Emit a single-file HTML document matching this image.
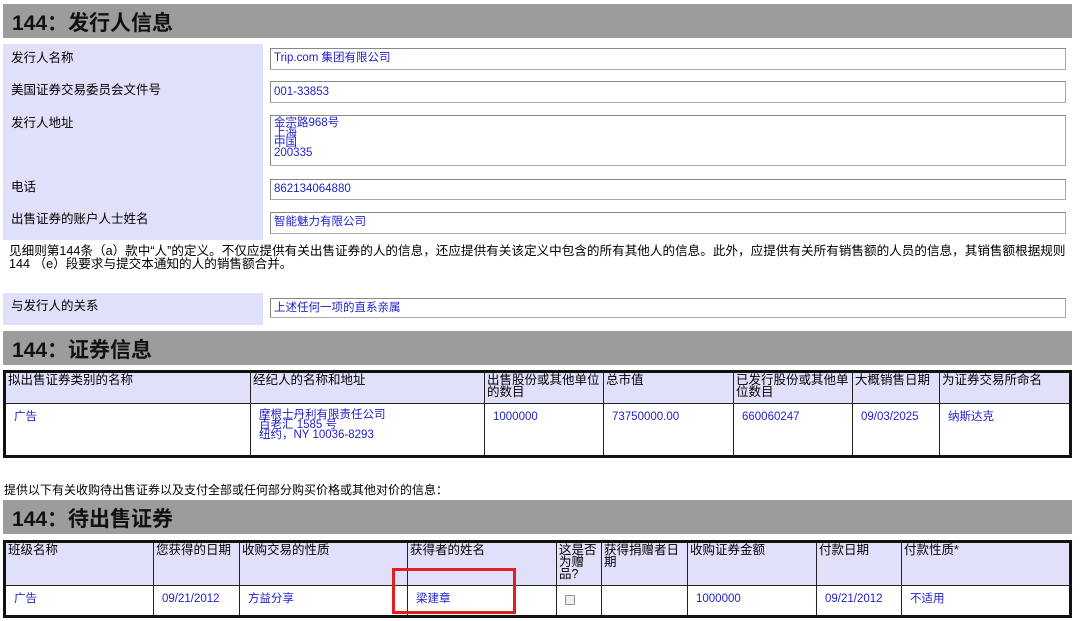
<!DOCTYPE html>
<html><head><meta charset="utf-8"><style>
*{margin:0;padding:0;box-sizing:border-box}
body{width:1080px;height:621px;background:#fff;font-family:"Liberation Sans","Noto Sans CJK SC",sans-serif;color:#000;position:relative;overflow:hidden}
.a{position:absolute}
.hd{position:absolute;left:3px;width:1069px;height:34px;background:#9c9c9c;font-size:21px;font-weight:bold;padding:3px 0 0 9px;color:#111}
.lab{position:absolute;left:3px;width:260px;background:#e0e0fa;font-size:12.5px;padding-left:8px}
.in{position:absolute;left:270px;width:796px;border:1px solid #aaa;border-top-color:#888;border-left-color:#888;font-size:11.5px;color:#2222cc;padding:2px 3px;line-height:10px}
table{position:absolute;left:3px;width:1069px;border-collapse:collapse;border:3px solid #111}
td{border:1.5px solid #222;vertical-align:top;font-size:12.5px;line-height:12px;padding:1px 2px}
tr.h td{background:#e0e0fa}
tr.d td{font-size:11.5px;color:#2222cc;padding:7px 8px}
</style></head><body>
<div class="hd" style="top:4px">144：发行人信息</div>
<div class="lab" style="top:44px;height:196px"></div>
<div class="a" style="left:11px;top:47px;font-size:12.5px">发行人名称</div>
<div class="a" style="left:11px;top:79px;font-size:12.5px">美国证券交易委员会文件号</div>
<div class="a" style="left:11px;top:112px;font-size:12.5px">发行人地址</div>
<div class="a" style="left:11px;top:176px;font-size:12.5px">电话</div>
<div class="a" style="left:11px;top:208px;font-size:12.5px">出售证券的账户人士姓名</div>
<div class="in" style="top:48px;height:22px;padding-top:4px">Trip.com 集团有限公司</div>
<div class="in" style="top:81px;height:22px;padding-top:5px">001-33853</div>
<div class="in" style="top:115px;height:51px">金宗路968号<br>上海<br>中国<br>200335</div>
<div class="in" style="top:179px;height:21px;padding-top:4px">862134064880</div>
<div class="in" style="top:212px;height:22px;padding-top:4px">智能魅力有限公司</div>
<div class="a" style="left:9px;top:245px;width:1062px;font-size:12.6px;line-height:13px">见细则第144条（a）款中“人”的定义。不仅应提供有关出售证券的人的信息，还应提供有关该定义中包含的所有其他人的信息。此外，应提供有关所有销售额的人员的信息，其销售额根据规则 144 （e）段要求与提交本通知的人的销售额合并。</div>
<div class="lab" style="top:293px;height:32px;padding-top:2px">与发行人的关系</div>
<div class="in" style="top:298px;height:20px;padding-top:4px">上述任何一项的直系亲属</div>
<div class="hd" style="top:331px">144：证券信息</div>
<table style="top:370px;height:88px">
<tr class="h" style="height:32px"><td style="width:246px">拟出售证券类别的名称</td><td style="width:234px">经纪人的名称和地址</td><td style="width:119px">出售股份或其他单位的数目</td><td style="width:130px">总市值</td><td style="width:119px">已发行股份或其他单位数目</td><td style="width:87px">大概销售日期</td><td>为证券交易所命名</td></tr>
<tr class="d"><td>广告</td><td style="line-height:10px;padding-top:6px">摩根士丹利有限责任公司<br>百老汇 1585 号<br>纽约，NY 10036-8293</td><td>1000000</td><td>73750000.00</td><td>660060247</td><td>09/03/2025</td><td>纳斯达克</td></tr>
</table>
<div class="a" style="left:4px;top:481px;font-size:12px">提供以下有关收购待出售证券以及支付全部或任何部分购买价格或其他对价的信息：</div>
<div class="hd" style="top:500px">144：待出售证券</div>
<table style="top:540px;height:76px">
<tr class="h" style="height:44px"><td style="width:149px">班级名称</td><td style="width:86px">您获得的日期</td><td style="width:168px">收购交易的性质</td><td style="width:149px">获得者的姓名</td><td style="width:45px">这是否为赠品?</td><td style="width:86px">获得捐赠者日期</td><td style="width:129px">收购证券金额</td><td style="width:85px">付款日期</td><td>付款性质*</td></tr>
<tr class="d"><td>广告</td><td>09/21/2012</td><td>方益分享</td><td>梁建章</td><td><span style="display:inline-block;width:10px;height:10px;border:1px solid #999;background:#eee;margin-top:2px"></span></td><td></td><td>1000000</td><td>09/21/2012</td><td>不适用</td></tr>
</table>
<div class="a" style="left:392px;top:568px;width:124px;height:46px;border:3px solid #e02020"></div>
</body></html>
